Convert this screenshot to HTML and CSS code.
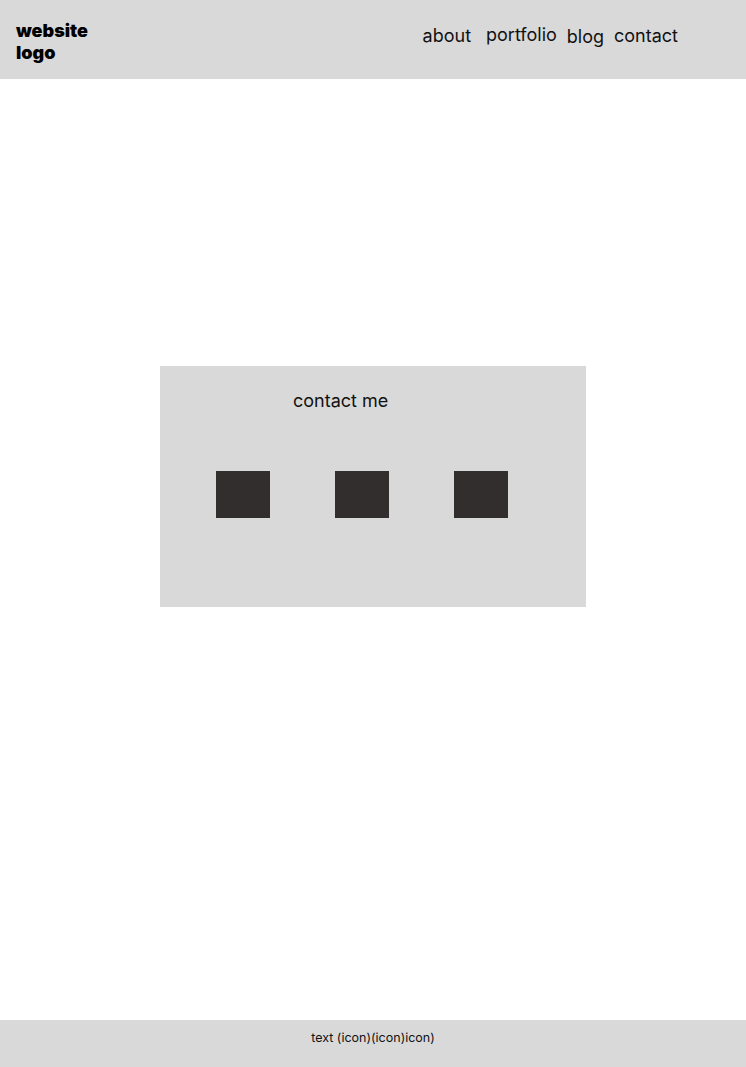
FILE: index.html
```html
<!DOCTYPE html>
<html lang="en">
<head>
    <meta charset="UTF-8">
    <meta name="viewport" content="width=device-width, initial-scale=1.0">
    <title>Contact</title>
    <link rel="stylesheet" href="styles.css">
</head>
<body>
    <header>
        <div class="logo">website<br>logo</div>
        <nav>
            <ul>
                <li class="about"><a href="#">about</a></li>
                <li class="portfolio"><a href="#">portfolio</a></li>
                <li class="blog"><a href="#">blog</a></li>
                <li><a href="#">contact</a></li>
            </ul>
        </nav>
    </header>

    <main>
        <section class="contact-card">
            <h2>contact me</h2>
            <div class="icons">
                <span class="icon"></span>
                <span class="icon"></span>
                <span class="icon"></span>
            </div>
        </section>
    </main>

    <footer>
        <p>text (icon)(icon)icon)</p>
    </footer>
</body>
</html>
```

FILE: styles.css
```css
body {
    font-family: 'Inter', 'Liberation Sans', sans-serif;
    margin: 0;
    padding: 0;
    background-color: #ffffff;
    color: #000000;
    min-height: 100vh;
    display: flex;
    flex-direction: column;
}

header {
    background-color: #d9d9d9;
    height: 79px;
    padding: 0 68px 0 16px;
    display: flex;
    align-items: flex-start;
    box-sizing: border-box;
}

.logo {
    font-weight: 900;
    font-size: 18px;
    line-height: 22px;
    margin-top: 20px;
}

nav {
    margin-left: auto;
    margin-top: 25px;
}

nav ul {
    list-style-type: none;
    margin: 0;
    padding: 0;
    display: flex;
    align-items: flex-start;
    gap: 10px;
}

nav li.about {
    margin-left: 1px;
    margin-right: 5px;
}

nav li.portfolio {
    margin-top: -1px;
}

nav li.blog {
    margin-top: 1px;
}

nav a {
    text-decoration: none;
    color: #111111;
    font-size: 18px;
    line-height: 22px;
}

main {
    flex: 1;
}

.contact-card {
    width: 426px;
    height: 241px;
    margin: 287px auto 0;
    background-color: #d9d9d9;
    padding: 24px 0 0 133px;
    box-sizing: border-box;
}

.contact-card h2 {
    margin: 0;
    font-size: 18px;
    font-weight: 400;
    line-height: 22px;
    color: #111111;
}

.icons {
    display: flex;
    gap: 65px;
    margin: 59px 0 0 -77px;
}

.icon {
    display: block;
    width: 54px;
    height: 47px;
    background-color: #332e2e;
}

footer {
    background-color: #d9d9d9;
    height: 47px;
    text-align: center;
}

footer p {
    margin: 0;
    padding-top: 10px;
    font-size: 12.5px;
    line-height: 15px;
    color: #111111;
}
```
